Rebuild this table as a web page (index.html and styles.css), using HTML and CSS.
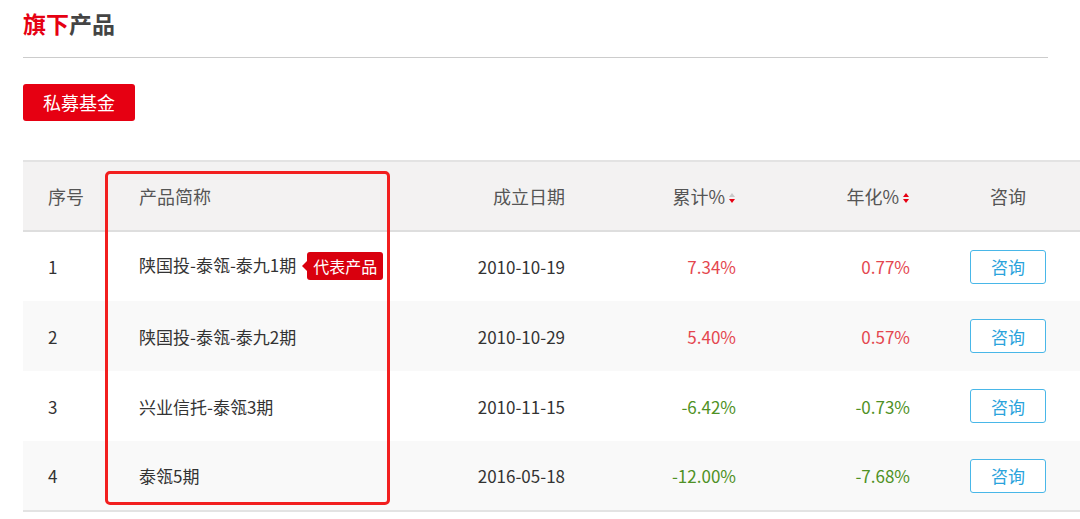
FILE: index.html
```html
<!DOCTYPE html>
<html lang="zh-CN">
<head>
  <meta charset="UTF-8">
  <title>旗下产品</title>
  <link rel="stylesheet" href="styles.css">
</head>
<body>
  <div class="page">
    <h2 class="section-title"><span class="hl">旗下</span>产品</h2>
    <div class="tabs">
      <button class="tab active">私募基金</button>
    </div>

    <div class="table-wrap">
      <table class="products">
        <colgroup>
          <col class="w-no">
          <col class="w-name">
          <col class="w-date">
          <col class="w-total">
          <col class="w-year">
          <col class="w-ask">
        </colgroup>
        <thead>
          <tr>
            <th class="col-no">序号</th>
            <th class="col-name">产品简称</th>
            <th class="col-num">成立日期</th>
            <th class="col-num">累计%<span class="sort"><i class="up"></i><i class="down on"></i></span></th>
            <th class="col-num">年化%<span class="sort"><i class="up on"></i><i class="down on"></i></span></th>
            <th class="col-ask">咨询</th>
          </tr>
        </thead>
        <tbody>
          <tr>
            <td class="col-no">1</td>
            <td class="col-name">陕国投-泰瓴-泰九1期<span class="badge">代表产品</span></td>
            <td class="col-num">2010-10-19</td>
            <td class="col-num up-val">7.34%</td>
            <td class="col-num up-val">0.77%</td>
            <td class="col-ask"><button class="ask">咨询</button></td>
          </tr>
          <tr>
            <td class="col-no">2</td>
            <td class="col-name">陕国投-泰瓴-泰九2期</td>
            <td class="col-num">2010-10-29</td>
            <td class="col-num up-val">5.40%</td>
            <td class="col-num up-val">0.57%</td>
            <td class="col-ask"><button class="ask">咨询</button></td>
          </tr>
          <tr>
            <td class="col-no">3</td>
            <td class="col-name">兴业信托-泰瓴3期</td>
            <td class="col-num">2010-11-15</td>
            <td class="col-num down-val">-6.42%</td>
            <td class="col-num down-val">-0.73%</td>
            <td class="col-ask"><button class="ask">咨询</button></td>
          </tr>
          <tr>
            <td class="col-no">4</td>
            <td class="col-name">泰瓴5期</td>
            <td class="col-num">2016-05-18</td>
            <td class="col-num down-val">-12.00%</td>
            <td class="col-num down-val">-7.68%</td>
            <td class="col-ask"><button class="ask">咨询</button></td>
          </tr>
        </tbody>
      </table>
      <!-- highlight frame drawn over the name column -->
      <div class="mark"></div>
    </div>
  </div>
</body>
</html>
```

FILE: styles.css
```css
html, body {
  margin: 0;
  overflow: hidden;
  background: #fff;
}

body {
  font-family: "Noto Sans CJK SC", "Noto Sans", sans-serif;
  color: #333;
}

.page {
  padding-left: 23px;
}

.section-title {
  margin: 0 32px 0 0;
  padding: 7px 0 18px;
  font-size: 23px;
  line-height: 32px;
  font-weight: bold;
  color: #444;
  border-bottom: 1px solid #ccc;
}

.section-title .hl {
  color: #e60012;
}

.tabs {
  padding: 26px 0 39px;
  line-height: 0;
}

.tab {
  height: 37px;
  padding: 0 20px;
  border: none;
  border-radius: 3px;
  background: #e60012;
  color: #fff;
  font-family: inherit;
  font-size: 18px;
  line-height: 37px;
  cursor: pointer;
}

.table-wrap {
  position: relative;
  width: 1063px;
}

.products {
  width: 1063px;
  border-collapse: collapse;
  table-layout: fixed;
  font-size: 17px;
}

.w-no { width: 90px; }
.w-name { width: 287px; }
.w-date { width: 185px; }
.w-total { width: 171px; }
.w-year { width: 174px; }
.w-ask { width: 156px; }

.products th,
.products td {
  box-sizing: border-box;
  padding-top: 0;
  padding-bottom: 0;
}

.products thead tr {
  background: #f3f2f2;
  border-top: 2px solid #e3e3e3;
  border-bottom: 2px solid #dedede;
}

.products th {
  height: 70px;
  font-weight: normal;
  font-size: 18px;
  color: #555;
}

.products td {
  height: 70px;
}

.products tbody tr:nth-child(even) {
  background: #f9f9f9;
}

.products tbody tr:last-child {
  border-bottom: 2px solid #e3e3e3;
}

.col-no {
  padding-left: 25px;
  text-align: left;
}

.col-name {
  padding-left: 26px;
  text-align: left;
  white-space: nowrap;
}

.col-num {
  padding-right: 20px;
  text-align: right;
}

.col-ask {
  text-align: center;
}

.sort {
  display: inline-block;
  vertical-align: middle;
  margin-left: 4px;
  width: 7px;
  height: 11px;
  position: relative;
  top: -1px;
}

.sort i {
  position: absolute;
  left: 0;
  width: 0;
  height: 0;
  border-left: 3.5px solid transparent;
  border-right: 3.5px solid transparent;
}

.sort .up {
  top: 0;
  border-bottom: 4px solid #c8c8c8;
}

.sort .down {
  top: 6px;
  border-top: 4px solid #c8c8c8;
}

.sort .up.on {
  border-bottom-color: #e60012;
}

.sort .down.on {
  border-top-color: #e60012;
}

.up-val {
  color: #e4474f;
}

.down-val {
  color: #4f9125;
}

.badge {
  position: relative;
  display: inline-block;
  margin-left: 11px;
  padding: 0 6px;
  height: 28px;
  line-height: 28px;
  border-radius: 3px;
  background: #d9000e;
  color: #fff;
  font-size: 16px;
  vertical-align: middle;
  top: -1px;
}

.badge::before {
  content: "";
  position: absolute;
  left: -5px;
  top: 9px;
  border-top: 5px solid transparent;
  border-bottom: 5px solid transparent;
  border-right: 5px solid #d9000e;
}

.ask {
  width: 76px;
  height: 34px;
  border: 1px solid #49b7e8;
  border-radius: 3px;
  background: #fff;
  color: #2aa3dc;
  font-family: inherit;
  font-size: 17px;
  cursor: pointer;
}

.mark {
  position: absolute;
  left: 82px;
  top: 11px;
  width: 279px;
  height: 328px;
  border: 3px solid #f21f1f;
  border-radius: 5px;
  pointer-events: none;
}
```
